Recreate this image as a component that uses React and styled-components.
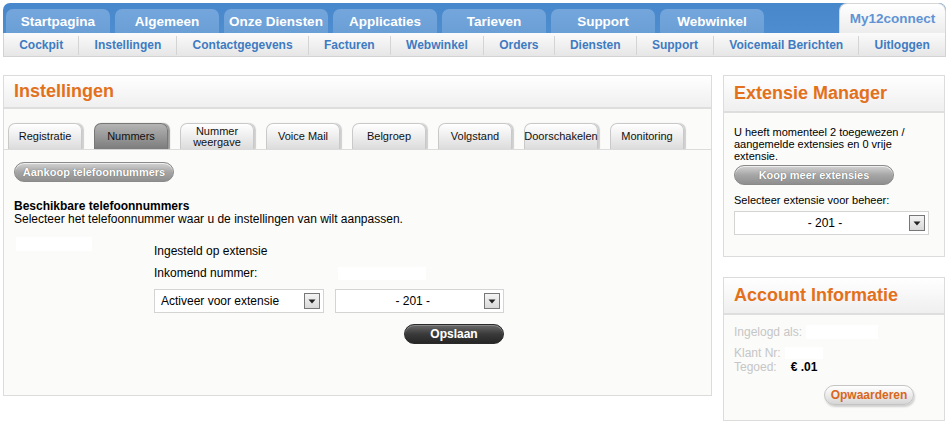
import React from 'react'
import styled, { createGlobalStyle } from 'styled-components'

const GlobalStyle = createGlobalStyle`
  body {
    margin: 0;
    background: #fff;
    font-family: 'Liberation Sans', Arial, sans-serif;
    font-size: 12px;
    color: #000;
  }
`

const Page = styled.div`
  padding: 3px 3px 0 3px;
  width: 943px;
`

// top navigation
const TopBar = styled.div`
  height: 30px;
  display: flex;
  align-items: flex-end;
  gap: 5px;
  padding-left: 3px;
  background: linear-gradient(#4787cb, #4e8dcf);
  border-radius: 7px 7px 0 0;
`
const TopTab = styled.div`
  width: 104px;
  height: 24px;
  display: flex;
  align-items: center;
  justify-content: center;
  color: #fff;
  font-weight: bold;
  font-size: 13.5px;
  background: linear-gradient(#74a6dc, #6a9fd6);
  border-radius: 7px 7px 0 0;
`
const AccountTab = styled.div`
  margin-left: auto;
  width: 107px;
  height: 30px;
  display: flex;
  align-items: center;
  justify-content: center;
  color: #5f93d5;
  font-weight: bold;
  font-size: 13.5px;
  background: linear-gradient(#ffffff, #ececec);
  border: 1px solid #d6d6d6;
  border-bottom: none;
  box-sizing: border-box;
  border-radius: 8px 8px 0 0;
`
const SubBar = styled.div`
  height: 24px;
  display: flex;
  align-items: flex-end;
  box-sizing: border-box;
  background: linear-gradient(#fbfbfb, #e6e6e6);
  border: 1px solid #d3d3d3;
  border-top: none;
`
const SubItem = styled.div`
  flex: 1 1 auto;
  text-align: center;
  white-space: nowrap;
  padding: 0 14px;
  height: 19px;
  line-height: 18px;
  margin-bottom: 1px;
  color: #3e7bc2;
  font-weight: bold;
  font-size: 12px;
  border-left: ${p => (p.first ? 'none' : '1px solid #d4d4d4')};
`

// main layout
const Main = styled.div`
  display: flex;
  align-items: flex-start;
  gap: 11px;
  margin-top: 18px;
`
const Panel = styled.div`
  width: 709px;
  height: 321px;
  box-sizing: border-box;
  border: 1px solid #dcdcdc;
  background: #fbfbf9;
`
const PanelHeader = styled.div`
  height: ${p => p.h || 31}px;
  display: flex;
  align-items: center;
  padding-left: 10px;
  background: linear-gradient(#ffffff, #efefef);
  border-bottom: 2px solid #dedede;
`
const Title = styled.h1`
  margin: 0;
  font-size: 18px;
  font-weight: bold;
  color: #e3701b;
`

const TabRow = styled.div`
  display: flex;
  gap: 12px;
  padding: 14px 0 0 4px;
  border-bottom: 1px solid #dcdcdc;
`
const Tab = styled.div`
  width: 74px;
  height: 26px;
  box-sizing: border-box;
  display: flex;
  align-items: center;
  justify-content: center;
  text-align: center;
  font-size: 11px;
  line-height: 11px;
  color: #111;
  border: 1px solid ${p => (p.active ? '#777' : '#c9c9c9')};
  border-bottom: none;
  border-radius: 7px 7px 0 0;
  background: ${p => (p.active ? 'linear-gradient(#b4b4b4, #7c7c7c)' : 'linear-gradient(#ffffff, #dcdcdc)')};
  box-shadow: 2px 0 1px ${p => (p.active ? '#999' : '#cfcfcf')};
`

const Content = styled.div`
  padding: 12px 10px 0 10px;
`
const PillButton = styled.div`
  display: inline-flex;
  align-items: center;
  justify-content: center;
  box-sizing: border-box;
  width: ${p => p.w}px;
  height: 20px;
  border-radius: 10px;
  font-size: 11px;
  font-weight: bold;
  color: #fff;
  text-shadow: 0 0 1px #555;
  border: 1px solid #8a8a8a;
  background: linear-gradient(#d4d4d4, #a6a6a6 50%, #8f8f8f);
  box-shadow: inset 0 1px 0 #eee;
`
const DarkButton = styled(PillButton)`
  border-color: #2a2a2a;
  background: linear-gradient(#6a6a6a, #3a3a3a 50%, #262626);
  box-shadow: inset 0 1px 0 #888;
  font-size: 12px;
`
const LightButton = styled(PillButton)`
  color: #d9661b;
  text-shadow: none;
  border-color: #c4c4c4;
  background: linear-gradient(#ffffff, #ececec 50%, #d6d6d6);
  box-shadow: 1px 2px 2px #cfcfcf;
  font-size: 12px;
`

const SectionTitle = styled.div`
  margin-top: 18px;
  font-weight: bold;
  font-size: 12px;
  line-height: 13px;
`
const SectionText = styled.div`
  font-size: 12px;
  line-height: 13px;
`

const FormArea = styled.div`
  display: flex;
  align-items: flex-start;
  margin-top: 11px;
`
const Blank = styled.div`
  width: ${p => p.w}px;
  height: ${p => p.h}px;
  background: #fff;
`
const FormLeft = styled.div`
  width: 140px;
  padding-left: 2px;
  box-sizing: border-box;
`
const FormCol = styled.div`
  width: 350px;
  padding-top: 3px;
  display: flex;
  flex-direction: column;
`
const FormLine = styled.div`
  height: 22px;
  display: flex;
  align-items: center;
  font-size: 12px;
`
const FormLabel = styled.span`
  width: 184px;
`
const SelectRow = styled.div`
  display: flex;
  gap: 11px;
  margin-top: 5px;
`
const Select = styled.div`
  width: ${p => p.w}px;
  height: 24px;
  box-sizing: border-box;
  border: 1px solid #d4d4d4;
  background: #fff;
  display: flex;
  align-items: center;
  padding: 0 3px 0 6px;
  font-size: 12px;
`
const SelectValue = styled.div`
  flex: 1;
  text-align: ${p => (p.center ? 'center' : 'left')};
`
const Arrow = styled.div`
  width: 16px;
  height: 16px;
  box-sizing: border-box;
  border: 1px solid #777;
  background: linear-gradient(#f4f4f4, #d8d8d8);
  display: flex;
  align-items: center;
  justify-content: center;
`
const ButtonRow = styled.div`
  display: flex;
  justify-content: ${p => p.justify || 'flex-end'};
  margin-top: ${p => p.mt || 0}px;
  padding-right: ${p => p.pr || 0}px;
`

// sidebar
const Side = styled.div`
  width: 222px;
  display: flex;
  flex-direction: column;
  gap: 20px;
`
const Box = styled.div`
  height: ${p => p.h}px;
  box-sizing: border-box;
  border: 1px solid #dcdcdc;
  background: #fbfbf9;
`
const BoxBody = styled.div`
  padding: ${p => p.pt || 13}px 10px 0 10px;
  font-size: 11px;
  line-height: 12px;
`
const Label = styled.div`
  margin-top: 9px;
  font-size: 11px;
`
const Muted = styled.div`
  display: flex;
  align-items: center;
  gap: 4px;
  height: ${p => p.h || 12}px;
  color: #c6c6c6;
  font-size: 12px;
  line-height: 12px;
  margin-top: ${p => p.mt || 0}px;
`
const Amount = styled.span`
  color: #000;
  font-weight: bold;
  margin-left: 10px;
`

const DownArrow = () => (
  <Arrow>
    <svg width="8" height="5" viewBox="0 0 8 5">
      <path d="M0.5 0.5 L7.5 0.5 L4 4.5 Z" fill="#222" />
    </svg>
  </Arrow>
)

const topTabs = ['Startpagina', 'Algemeen', 'Onze Diensten', 'Applicaties', 'Tarieven', 'Support', 'Webwinkel']
const subItems = ['Cockpit', 'Instellingen', 'Contactgegevens', 'Facturen', 'Webwinkel', 'Orders', 'Diensten', 'Support', 'Voicemail Berichten', 'Uitloggen']
const tabs = ['Registratie', 'Nummers', 'Nummer weergave', 'Voice Mail', 'Belgroep', 'Volgstand', 'Doorschakelen', 'Monitoring']

export default function App() {
  return (
    <Page>
      <GlobalStyle />
      <TopBar>
        {topTabs.map(t => (
          <TopTab key={t}>{t}</TopTab>
        ))}
        <AccountTab>My12connect</AccountTab>
      </TopBar>
      <SubBar>
        {subItems.map((s, i) => (
          <SubItem key={s} first={i === 0}>
            {s}
          </SubItem>
        ))}
      </SubBar>

      <Main>
        <Panel>
          <PanelHeader>
            <Title>Instellingen</Title>
          </PanelHeader>
          <TabRow>
            {tabs.map(t => (
              <Tab key={t} active={t === 'Nummers'}>
                {t === 'Nummer weergave' ? (
                  <span>
                    Nummer
                    <br />
                    weergave
                  </span>
                ) : (
                  t
                )}
              </Tab>
            ))}
          </TabRow>
          <Content>
            <PillButton w={160}>Aankoop telefoonnummers</PillButton>
            <SectionTitle>Beschikbare telefoonnummers</SectionTitle>
            <SectionText>Selecteer het telefoonnummer waar u de instellingen van wilt aanpassen.</SectionText>
            <FormArea>
              <FormLeft>
                <Blank w={76} h={14} />
              </FormLeft>
              <FormCol>
                <FormLine>Ingesteld op extensie</FormLine>
                <FormLine>
                  <FormLabel>Inkomend nummer:</FormLabel>
                  <Blank w={88} h={13} />
                </FormLine>
                <SelectRow>
                  <Select w={170}>
                    <SelectValue>Activeer voor extensie</SelectValue>
                    <DownArrow />
                  </Select>
                  <Select w={170}>
                    <SelectValue center>- 201 -</SelectValue>
                    <DownArrow />
                  </Select>
                </SelectRow>
                <ButtonRow mt={11}>
                  <DarkButton w={100}>Opslaan</DarkButton>
                </ButtonRow>
              </FormCol>
            </FormArea>
          </Content>
        </Panel>

        <Side>
          <Box h={182}>
            <PanelHeader h={35}>
              <Title>Extensie Manager</Title>
            </PanelHeader>
            <BoxBody>
              U heeft momenteel 2 toegewezen / aangemelde extensies en 0 vrije extensie.
              <ButtonRow justify="flex-start" mt={3}>
                <PillButton w={160}>Koop meer extensies</PillButton>
              </ButtonRow>
              <Label>Selecteer extensie voor beheer:</Label>
              <ButtonRow justify="flex-start" mt={5}>
                <Select w={195}>
                  <SelectValue center>- 201 -</SelectValue>
                  <DownArrow />
                </Select>
              </ButtonRow>
            </BoxBody>
          </Box>
          <Box h={144}>
            <PanelHeader h={35}>
              <Title>Account Informatie</Title>
            </PanelHeader>
            <BoxBody pt={10}>
              <Muted h={14}>
                Ingelogd als:
                <Blank w={72} h={14} />
              </Muted>
              <Muted mt={8}>
                Klant Nr:
                <Blank w={38} h={12} />
              </Muted>
              <Muted mt={2}>
                Tegoed:
                <Amount>€ .01</Amount>
              </Muted>
              <ButtonRow mt={12} pr={20}>
                <LightButton w={90}>Opwaarderen</LightButton>
              </ButtonRow>
            </BoxBody>
          </Box>
        </Side>
      </Main>
    </Page>
  )
}
